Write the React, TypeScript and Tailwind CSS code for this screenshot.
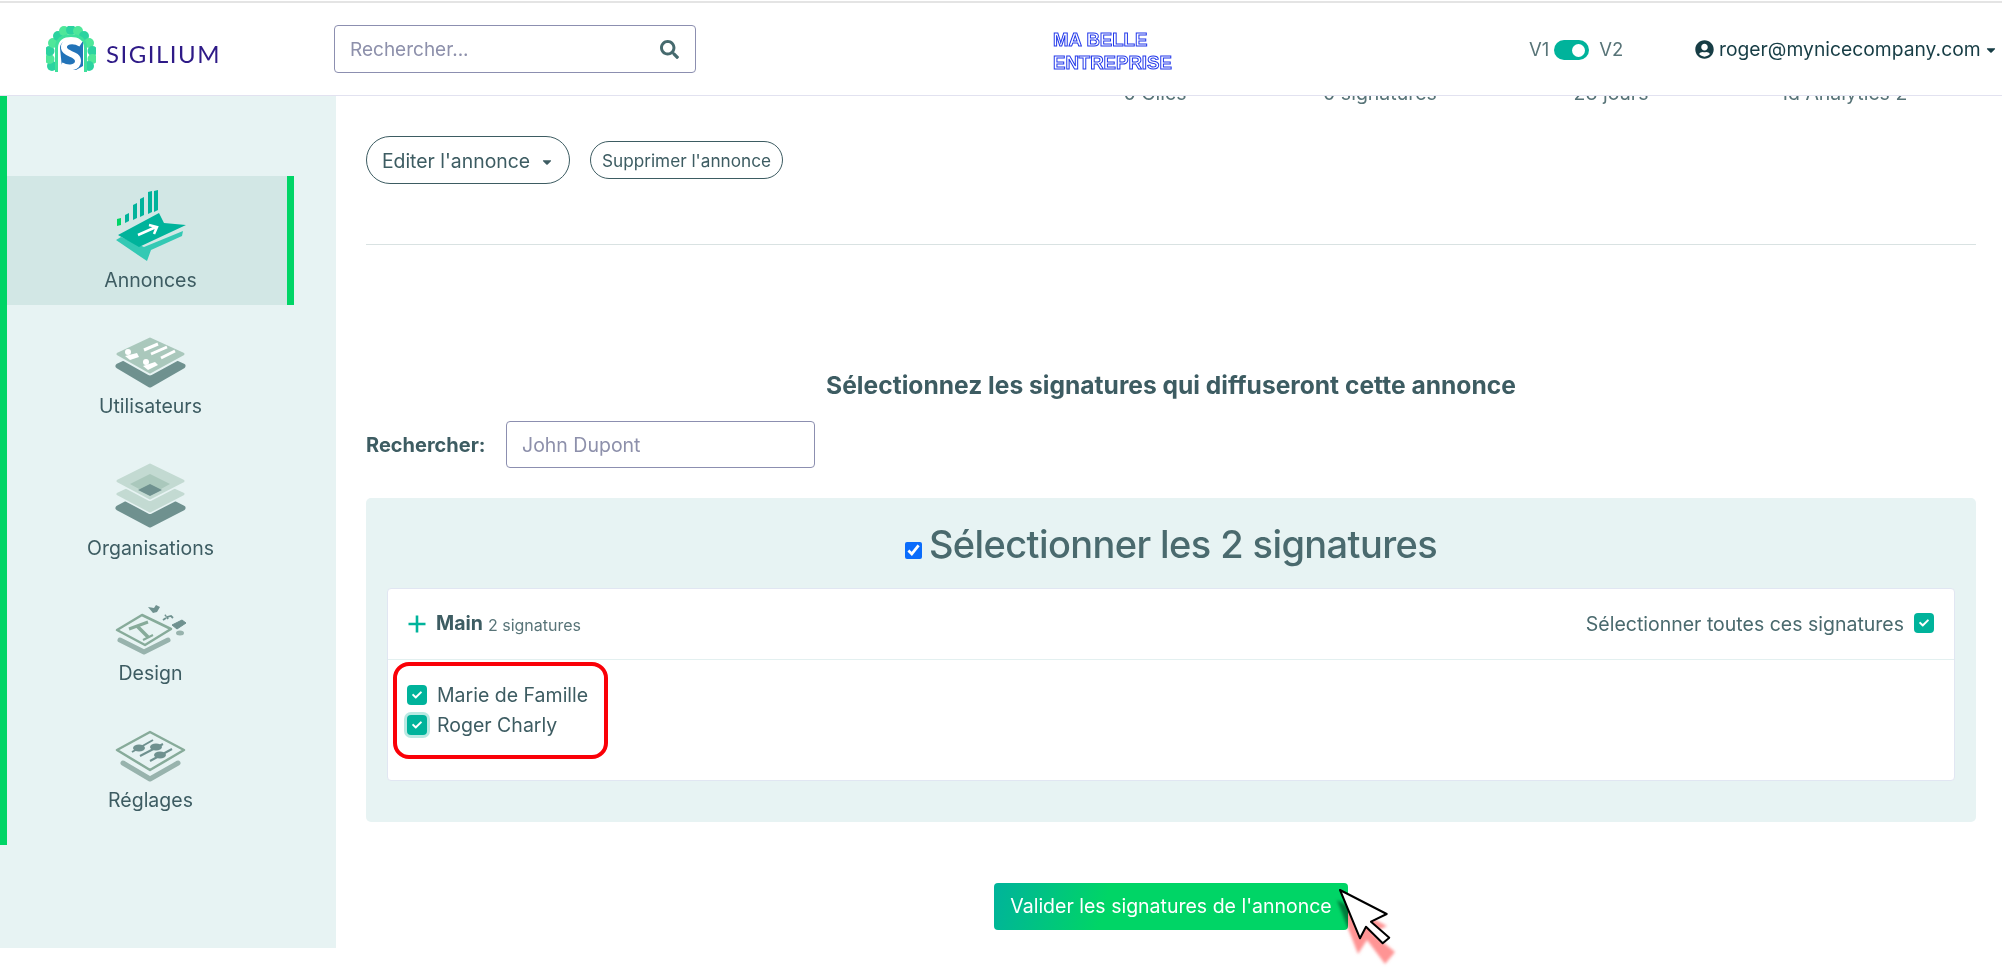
import React from "react";
import { FaCaretDown, FaCheck, FaSearch, FaUserCircle } from "react-icons/fa";

const font = "font-['Inter','Liberation_Sans',sans-serif]";

const Logo = () => (
  <svg width="50" height="46" viewBox="0 0 50 46" className="shrink-0">
    {[
      [6, 40], [3.5, 33], [3.5, 25], [7, 17], [12, 10], [18, 5], [25, 4], [32, 5], [38, 10], [43, 17], [46.5, 25], [46.5, 33], [43, 40],
    ].map(([cx, cy], i) => (
      <circle key={i} cx={cx} cy={cy} r="5" fill={i % 2 ? "#4fe79a" : "#2bd3a0"} />
    ))}
    <path d="M9 46 V22 C9 12 16 8 25 8 C34 8 41 12 41 22 V46 Z" fill="#3fe09c" />
    <path d="M12 46 V22 C12 14 18 11 25 11 C32 11 38 14 38 22 V46 Z" fill="#fff" />
    <path d="M14 22 C14 16 20 14 27 14 L37 16 V40 L30 44 L16 42 Z" fill="#2273b8" />
    <path d="M35 18 C27 13 17 15 18 22 C19 29 32 27 32 35 C32 42 22 43 15 39" fill="none" stroke="#fff" strokeWidth="6" />
  </svg>
);

const AnnoncesIcon = () => (
  <svg width="70" height="71" viewBox="0 0 70 71">
    <path d="M1 29 L5 28 V35 L1 36 Z" fill="#00d566" />
    <path d="M9 25 L13 23 V31 L9 33 Z M17 15 L21 13 V28 L17 30 Z M24 9 L28 7 V25 L24 27 Z M32 2 L36 1 V22 L32 24 Z M38 1 L42 0 V20 L38 22 Z" fill="#00b39b" />
    <path d="M0 50 L5 47 L28 57 L67 41 L66 46 L35 60 L31 71 L22 65 Z" fill="#34c9b4" />
    <path d="M2 45 L43 23 L48 33 L70 35 L23 57 Z" fill="#00b39b" />
    <path d="M22 45 L40 37 M33 35 L41 37 L38 44" fill="none" stroke="#fff" strokeWidth="2.5" />
  </svg>
);

const UtilisateursIcon = () => (
  <svg width="71" height="51" viewBox="0 0 71 51">
    <polygon points="3,29 35,14 68,29 35,48" fill="#6f918f" stroke="#6f918f" strokeWidth="5" strokeLinejoin="round" />
    <polygon points="3,17 35,2 68,17 35,35" fill="#aac8bc" stroke="#e7f3f3" strokeWidth="7" strokeLinejoin="round" />
    <polygon points="3,17 35,2 68,17 35,35" fill="#aac8bc" stroke="#aac8bc" strokeWidth="3" strokeLinejoin="round" />
    <path d="M29 13 L43 7 M36 17 L52 10 M46 21 L60 14" stroke="#fff" strokeWidth="3" />
    <circle cx="13" cy="15" r="3" fill="#fff" />
    <path d="M10 19 L22 16 L24 20 L15 23 Z" fill="#fff" />
    <circle cx="31" cy="25" r="3" fill="#fff" />
    <path d="M28 29 L40 25 L43 28 L33 33 Z" fill="#fff" />
  </svg>
);

const OrganisationsIcon = () => (
  <svg width="71" height="65" viewBox="0 0 71 65">
    <polygon points="3,45 35,28 68,45 35,62" fill="#6f918f" stroke="#6f918f" strokeWidth="5" strokeLinejoin="round" />
    <polygon points="3,31 35,16 68,31 35,48" fill="#c3dad2" stroke="#e7f3f3" strokeWidth="6" strokeLinejoin="round" />
    <polygon points="3,31 35,16 68,31 35,48" fill="#c3dad2" stroke="#c3dad2" strokeWidth="3" strokeLinejoin="round" />
    <polygon points="3,18 35,2 68,18 35,35" fill="#c3dad2" stroke="#e7f3f3" strokeWidth="6" strokeLinejoin="round" />
    <polygon points="3,18 35,2 68,18 35,35" fill="#c3dad2" stroke="#c3dad2" strokeWidth="3" strokeLinejoin="round" />
    <polygon points="15,21 35,11 55,21 35,32" fill="#aac8bc" />
    <polygon points="23,27 35,21 47,27 35,33" fill="#6f918f" />
  </svg>
);

const DesignIcon = () => (
  <svg width="71" height="51" viewBox="0 0 71 51">
    <path d="M5 35 L29 47 L53 35" fill="none" stroke="#98b3ad" strokeWidth="5" strokeLinecap="round" strokeLinejoin="round" />
    <polygon points="2,25 27,10 56,24 30,40" fill="none" stroke="#87ab9a" strokeWidth="2.5" strokeLinejoin="round" />
    <path d="M14 24 L33 17" stroke="#87ab9a" strokeWidth="3" />
    <path d="M22 21 L33 32" stroke="#87ab9a" strokeWidth="3.5" />
    <path d="M28 35 L38 30" stroke="#87ab9a" strokeWidth="2" />
    <path d="M33 2 L39 3 L41 0 L45 2 L42 7 L38 8 Z" fill="#6f918f" />
    <path d="M48 15 L51 13 M50 11 L51 10 M53 14 L52 12 L56 11 L58 13" fill="none" stroke="#6f918f" strokeWidth="1.8" />
    <polygon points="57,20 67,15 71,18 62,24" fill="#6f918f" stroke="#6f918f" strokeLinejoin="round" />
    <ellipse cx="65" cy="28" rx="4" ry="2.5" fill="#98b3ad" />
  </svg>
);

const ReglagesIcon = () => (
  <svg width="71" height="52" viewBox="0 0 71 52">
    <path d="M8 33 L35 49 L63 33" fill="none" stroke="#98b3ad" strokeWidth="5" strokeLinecap="round" strokeLinejoin="round" />
    <polygon points="2,20 35,2 69,20 35,40" fill="none" stroke="#87ab9a" strokeWidth="2.5" strokeLinejoin="round" />
    <path d="M17 22 L38 10 M25 26 L48 14 M35 31 L57 19" stroke="#6f918f" strokeWidth="2" />
    <ellipse cx="24" cy="18" rx="6" ry="3.5" fill="#6f918f" />
    <ellipse cx="41" cy="17" rx="6" ry="3.5" fill="#6f918f" />
    <ellipse cx="45" cy="25" rx="6" ry="3.5" fill="#6f918f" />
  </svg>
);

const Box = ({ halo = false }: { halo?: boolean }) => (
  <span className={`flex h-[20px] w-[20px] shrink-0 items-center justify-center rounded-[4px] bg-[#00b39b] text-white ${halo ? "ring-[3px] ring-[#b9e9e2]" : ""}`}>
    <FaCheck size={10} />
  </span>
);

const Cursor = () => (
  <svg width="70" height="90" viewBox="0 0 70 90" className="absolute left-[346px] top-[7px] overflow-visible">
    <defs>
      <filter id="soft" x="-30%" y="-30%" width="160%" height="160%">
        <feGaussianBlur stdDeviation="1.6" />
      </filter>
    </defs>
    <polygon points="-3,10 47,36 32,43 55,62 45,74 27,50 18,64" fill="#ff6f6f" opacity="0.75" filter="url(#soft)" className="mix-blend-multiply" />
    <polygon points="0,0 46.7,24 31,31.7 49.3,47.7 42.7,53.3 26,36.7 20,48.3" fill="#fff" stroke="#000" strokeWidth="2" strokeLinejoin="round" />
  </svg>
);

const navItems = [
  { label: "Utilisateurs", icon: <UtilisateursIcon />, cls: "h-[141px] pt-[32px]" },
  { label: "Organisations", icon: <OrganisationsIcon />, cls: "h-[141px] pt-[17px]" },
  { label: "Design", icon: <DesignIcon />, cls: "h-[127px] pt-[18px]" },
  { label: "Réglages", icon: <ReglagesIcon />, cls: "h-[125px] pt-[16px]" },
];

export default function App() {
  return (
    <div className={`${font} flex h-screen w-full flex-col overflow-hidden bg-white text-[19.5px] text-[#3d5c62]`}>
      <header className="relative z-10 mt-px flex h-[95px] shrink-0 items-center border-t-2 border-b border-t-[#e4e4e4] border-b-[#e2e2f0] bg-white">
        <div className="flex w-[334px] shrink-0 items-center pl-[46px]">
          <Logo />
          <span className="ml-[10px] mt-[10px] font-['Lato',sans-serif] text-[24px] leading-none tracking-[1.5px] text-[#2e1a87]">SIGILIUM</span>
        </div>
        <div className="flex h-[48px] w-[362px] shrink-0 items-center justify-between rounded-[4px] border border-[#8c8fb0] pl-[15px] pr-[16px]">
          <input placeholder="Rechercher..." className="mt-[2px] w-[260px] bg-transparent text-[19px] outline-none placeholder:text-[#8d90ab]" />
          <FaSearch size={19} className="text-[#466a6e]" />
        </div>
        <div className="ml-[357px] mt-[3px] w-[130px] shrink-0 font-['Liberation_Sans',sans-serif] text-[18.6px] font-bold leading-[23px] text-transparent [-webkit-text-stroke:1px_#2238ea]">
          <div>MA BELLE</div>
          <div>ENTREPRISE</div>
        </div>
        <div className="ml-[346px] mt-[2px] flex w-[97px] shrink-0 items-center text-[18.5px] text-[#587478]">
          <span>V1</span>
          <span className="ml-[5px] flex h-[20px] w-[35px] items-center justify-end rounded-full bg-[#00b39b] pr-[4px]">
            <span className="h-[13px] w-[13px] rounded-full bg-white" />
          </span>
          <span className="ml-[10px]">V2</span>
        </div>
        <div className="ml-[69px] mt-[1px] flex shrink-0 items-center text-[19.3px] text-[#173d45]">
          <FaUserCircle size={19} className="mr-[5px]" />
          <span>roger@mynicecompany.com</span>
          <FaCaretDown size={14} className="ml-[3px]" />
        </div>
      </header>

      <div className="flex min-h-0 flex-1">
        <aside className="h-[852px] w-[336px] shrink-0 bg-[#e7f3f3]">
          <nav className="h-[749px] w-[294px] border-l-[7px] border-[#00d566] pt-[80px]">
            <div className="flex h-[129px] w-[287px] flex-col items-center border-r-[7px] border-r-[#00d566] bg-[#d2e7e5] pl-[7px] pt-[14px]">
              <AnnoncesIcon />
              <span className="mt-[7px] leading-[24px]">Annonces</span>
            </div>
            {navItems.map(item => (
              <div key={item.label} className={`flex w-[287px] flex-col items-center ${item.cls}`}>
                {item.icon}
                <span className={`leading-[24px] ${item.label === "Organisations" ? "mt-[8px]" : item.label === "Design" ? "mt-[5px]" : "mt-[6px]"}`}>{item.label}</span>
              </div>
            ))}
          </nav>
        </aside>

        <main className="min-w-0 flex-1 overflow-hidden pl-[30px] pr-[26px]">
          <div className="-mt-[17px] ml-[674px] flex h-[28px] text-center leading-[28px] text-[#587478]">
            <span className="w-[230px]">0 Clics</span>
            <span className="w-[220px]">0 signatures</span>
            <span className="w-[242px]">23 jours</span>
            <span className="w-[226px]">Id Analytics 2</span>
          </div>

          <div className="mt-[29px] flex items-center gap-[20px]">
            <button className="flex h-[48px] w-[204px] items-center justify-center gap-[10px] rounded-full border border-[#3d5c62] pt-[3px] text-[19.4px]">
              Editer l'annonce <FaCaretDown size={14} />
            </button>
            <button className="h-[38px] w-[193px] rounded-full border border-[#3d5c62] pt-[2px] text-[17.2px]">Supprimer l'annonce</button>
          </div>

          <hr className="mt-[60px] border-[#d9e2e2]" />

          <h2 className="mt-[125px] text-center text-[24.6px] font-bold leading-[30px]">
            Sélectionnez les signatures qui diffuseront cette annonce
          </h2>

          <div className="mt-[21px] flex items-center">
            <label className="w-[140px] pt-px text-[20px] font-bold">Rechercher:</label>
            <input placeholder="John Dupont" className="h-[47px] w-[309px] rounded-[4px] border border-[#8c8fb0] px-[15px] text-[19.5px] outline-none placeholder:text-[#8d90ab]" />
          </div>

          <section className="mt-[30px] h-[324px] rounded-[5px] bg-[#e7f3f3] px-[21px] pt-[22px]">
            <div className="flex h-[48px] items-center justify-center gap-[7px]">
              <input type="checkbox" defaultChecked className="mt-[12px] h-[17px] w-[17px] accent-[#0b6cfb]" />
              <span className="text-[38px] font-medium leading-[48px] tracking-[-0.6px] text-[#4a6a6e]">Sélectionner les 2 signatures</span>
            </div>

            <div className="mt-[20px] h-[193px] rounded-[4px] border border-[#e1e6f2] bg-white">
              <div className="flex h-[71px] items-center justify-between border-b border-[#e3f0f0] pl-[15px] pr-[20px]">
                <div className="flex items-center">
                  <svg width="28" height="28" viewBox="0 0 28 28" className="shrink-0 text-[#00b39b]">
                    <path d="M14 5.5 V22.5 M5.5 14 H22.5" stroke="currentColor" strokeWidth="2.6" />
                  </svg>
                  <span className="ml-[5px] font-bold">Main</span>
                  <span className="ml-[5px] mt-[2px] text-[16px] text-[#587478]">2 signatures</span>
                </div>
                <div className="flex items-center">
                  <span className="mt-[2px] text-[#4a6a6e]">Sélectionner toutes ces signatures</span>
                  <span className="ml-[10px] -mt-[3px]"><Box /></span>
                </div>
              </div>

              <div className="relative pl-[19px] pt-[20px]">
                <div className="flex h-[30px] items-center gap-[10px]">
                  <Box /> <span className="pt-[2px]">Marie de Famille</span>
                </div>
                <div className="flex h-[30px] items-center gap-[10px]">
                  <Box halo /> <span className="pt-[2px]">Roger Charly</span>
                </div>
                <div className="absolute left-[5px] top-[2px] h-[97px] w-[215px] rounded-[16px] border-[4px] border-[#fa0007]" />
              </div>
            </div>
          </section>

          <div className="mt-[61px] flex justify-center">
            <div className="relative">
              <button className="h-[47px] w-[354px] rounded-[4px] bg-[linear-gradient(105deg,#00b39b_0%,#00d566_32%)] text-white">
                Valider les signatures de l'annonce
              </button>
              <Cursor />
            </div>
          </div>
        </main>
      </div>
    </div>
  );
}
